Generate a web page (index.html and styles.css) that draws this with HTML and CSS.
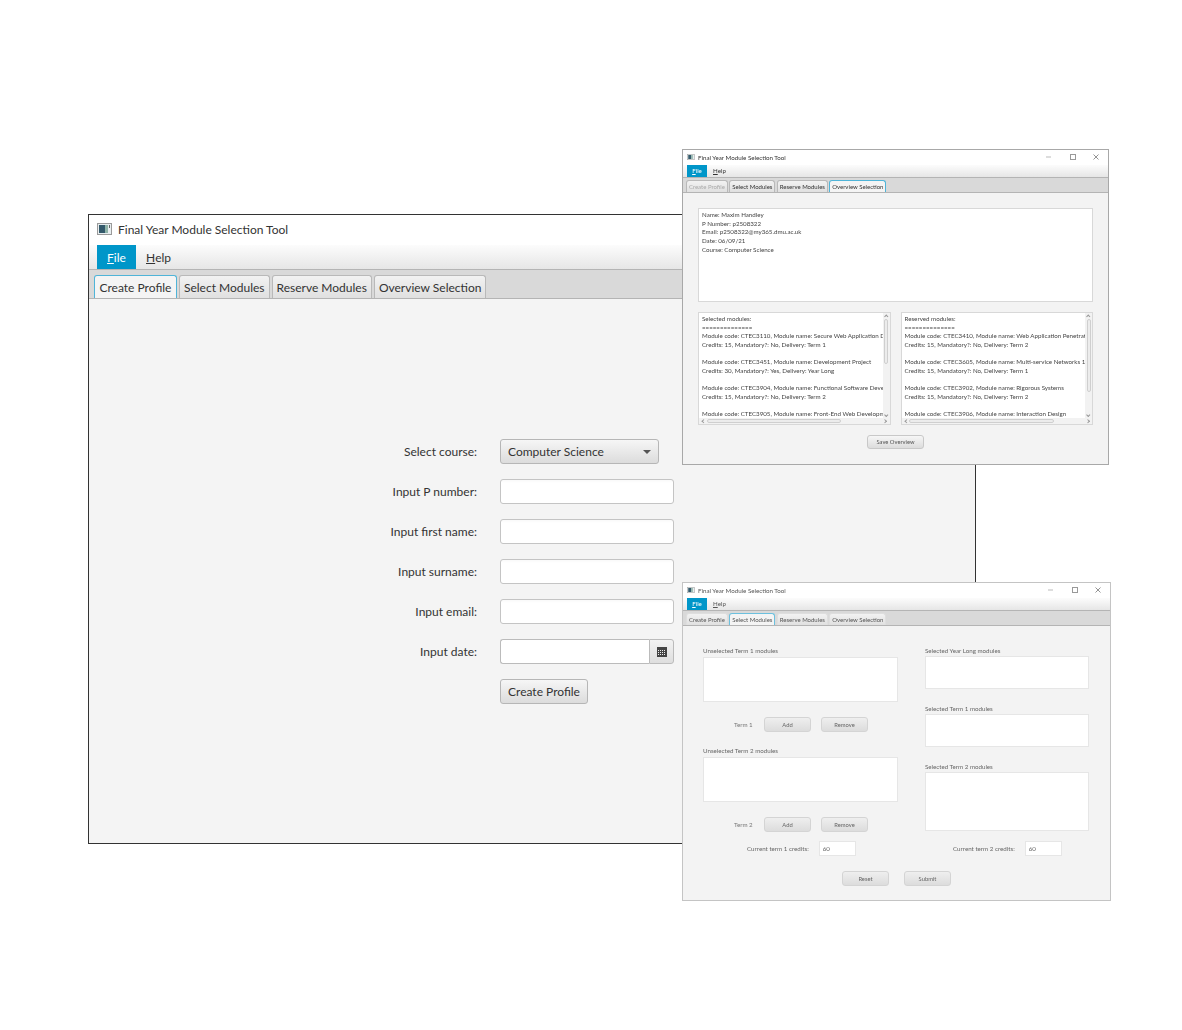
FILE: index.html
```html
<!DOCTYPE html>
<html lang="en">
<head>
    <meta charset="UTF-8">
    <meta name="viewport" content="width=device-width, initial-scale=1.0">
    <link rel="stylesheet" href="styles.css">
    <title>Final Year Module Selection Tool</title>
</head>
<body>
    <!-- main window: create profile -->
    <div class="window main-window">
        <div class="titlebar">
            <svg class="app-icon" viewBox="0 0 15 12"><rect x="0.5" y="0.5" width="14" height="11" fill="#e8eef0" stroke="#9a9a9a"/><rect x="2" y="2" width="6" height="8" fill="#33596b"/><rect x="8" y="2" width="3" height="8" fill="#8fb3a8"/><rect x="12" y="2" width="1" height="3" fill="#666"/></svg>
            <span>Final Year Module Selection Tool</span>
        </div>
        <div class="menubar">
            <div class="menu menu-active"><u>F</u>ile</div>
            <div class="menu"><u>H</u>elp</div>
        </div>
        <div class="tabbar">
            <div class="tab tab-selected">Create Profile</div>
            <div class="tab">Select Modules</div>
            <div class="tab">Reserve Modules</div>
            <div class="tab">Overview Selection</div>
        </div>
        <div class="content profile-form">
            <label>Select course:</label>
            <div class="button select-box"><span>Computer Science</span><i class="arrow"></i></div>
            <label>Input P number:</label>
            <div class="input"></div>
            <label>Input first name:</label>
            <div class="input"></div>
            <label>Input surname:</label>
            <div class="input"></div>
            <label>Input email:</label>
            <div class="input"></div>
            <label>Input date:</label>
            <div class="date-picker">
                <div class="date-field"></div>
                <div class="date-button">
                    <svg viewBox="0 0 10 10" width="10" height="10"><rect width="10" height="10" fill="#444"/><g fill="#eee"><rect x="1" y="3" width="1" height="1"/><rect x="3" y="3" width="1" height="1"/><rect x="5" y="3" width="1" height="1"/><rect x="7" y="3" width="1" height="1"/><rect x="1" y="5" width="1" height="1"/><rect x="3" y="5" width="1" height="1"/><rect x="5" y="5" width="1" height="1"/><rect x="7" y="5" width="1" height="1"/><rect x="1" y="7" width="1" height="1"/><rect x="3" y="7" width="1" height="1"/><rect x="5" y="7" width="1" height="1"/><rect x="7" y="7" width="1" height="1"/></g></svg>
                </div>
            </div>
            <span></span>
            <div class="button create-button">Create Profile</div>
        </div>
    </div>

    <!-- small window: overview -->
    <div class="window small-window overview-window">
        <div class="titlebar">
            <svg class="app-icon" viewBox="0 0 15 12"><rect x="0.5" y="0.5" width="14" height="11" fill="#e8eef0" stroke="#9a9a9a"/><rect x="2" y="2" width="6" height="8" fill="#33596b"/><rect x="8" y="2" width="3" height="8" fill="#8fb3a8"/></svg>
            <span>Final Year Module Selection Tool</span>
            <div class="window-controls">
                <svg viewBox="0 0 6 6"><path d="M0 3H5" stroke="#bbb"/></svg>
                <svg viewBox="0 0 6 6"><rect x="0.5" y="0.5" width="5" height="5" fill="none" stroke="#999"/></svg>
                <svg viewBox="0 0 6 6"><path d="M0.5 0.5L5.5 5.5M5.5 0.5L0.5 5.5" stroke="#666" stroke-width="0.7"/></svg>
            </div>
        </div>
        <div class="menubar">
            <div class="menu menu-active"><u>F</u>ile</div>
            <div class="menu"><u>H</u>elp</div>
        </div>
        <div class="tabbar">
            <div class="tab tab-disabled">Create Profile</div>
            <div class="tab">Select Modules</div>
            <div class="tab">Reserve Modules</div>
            <div class="tab tab-selected">Overview Selection</div>
        </div>
        <div class="content overview-content">
            <div class="text-area profile-text">Name: Maxim Handley
P Number: p2508322
Email: p2508322@my365.dmu.ac.uk
Date: 06/09/21
Course: Computer Science</div>
            <div class="overview-panes">
                <div class="scroll-pane">
                    <div class="pane-text">Selected modules:
==============
Module code: CTEC3110, Module name: Secure Web Application Development
Credits: 15, Mandatory?: No, Delivery: Term 1

Module code: CTEC3451, Module name: Development Project
Credits: 30, Mandatory?: Yes, Delivery: Year Long

Module code: CTEC3904, Module name: Functional Software Development
Credits: 15, Mandatory?: No, Delivery: Term 2

Module code: CTEC3905, Module name: Front-End Web Development</div>
                    <div class="vscroll"><i class="chev chev-up"></i><div class="vthumb selected-vthumb"></div><i class="chev chev-down"></i></div>
                    <div class="hscroll"><i class="chev chev-left"></i><div class="hthumb selected-hthumb"></div><i class="chev chev-right"></i></div>
                </div>
                <div class="scroll-pane">
                    <div class="pane-text">Reserved modules:
==============
Module code: CTEC3410, Module name: Web Application Penetration Testing
Credits: 15, Mandatory?: No, Delivery: Term 2

Module code: CTEC3605, Module name: Multi-service Networks 1
Credits: 15, Mandatory?: No, Delivery: Term 1

Module code: CTEC3902, Module name: Rigorous Systems
Credits: 15, Mandatory?: No, Delivery: Term 2

Module code: CTEC3906, Module name: Interaction Design</div>
                    <div class="vscroll"><i class="chev chev-up"></i><div class="vthumb reserved-vthumb"></div><i class="chev chev-down"></i></div>
                    <div class="hscroll"><i class="chev chev-left"></i><div class="hthumb reserved-hthumb"></div><i class="chev chev-right"></i></div>
                </div>
            </div>
            <div class="button save-button">Save Overview</div>
        </div>
    </div>

    <!-- small window: select modules, out of focus -->
    <div class="window small-window select-window">
        <div class="titlebar">
            <svg class="app-icon" viewBox="0 0 15 12"><rect x="0.5" y="0.5" width="14" height="11" fill="#e8eef0" stroke="#9a9a9a"/><rect x="2" y="2" width="6" height="8" fill="#33596b"/><rect x="8" y="2" width="3" height="8" fill="#8fb3a8"/></svg>
            <span>Final Year Module Selection Tool</span>
            <div class="window-controls">
                <svg viewBox="0 0 6 6"><path d="M0 3H5" stroke="#bbb"/></svg>
                <svg viewBox="0 0 6 6"><rect x="0.5" y="0.5" width="5" height="5" fill="none" stroke="#999"/></svg>
                <svg viewBox="0 0 6 6"><path d="M0.5 0.5L5.5 5.5M5.5 0.5L0.5 5.5" stroke="#666" stroke-width="0.7"/></svg>
            </div>
        </div>
        <div class="menubar">
            <div class="menu menu-active"><u>F</u>ile</div>
            <div class="menu"><u>H</u>elp</div>
        </div>
        <div class="tabbar">
            <div class="tab">Create Profile</div>
            <div class="tab tab-selected">Select Modules</div>
            <div class="tab">Reserve Modules</div>
            <div class="tab">Overview Selection</div>
        </div>
        <div class="content select-content">
            <div class="select-columns">
                <div class="left-column">
                    <div class="list-label">Unselected Term 1 modules</div>
                    <div class="list list-term"></div>
                    <div class="term-row">
                        <span class="term-name">Term 1</span>
                        <div class="button term-button">Add</div>
                        <div class="button term-button">Remove</div>
                    </div>
                    <div class="list-label second-label">Unselected Term 2 modules</div>
                    <div class="list list-term"></div>
                    <div class="term-row">
                        <span class="term-name">Term 2</span>
                        <div class="button term-button">Add</div>
                        <div class="button term-button">Remove</div>
                    </div>
                    <div class="credits-row left-credits">
                        <span>Current term 1 credits:</span>
                        <div class="credits-input">60</div>
                    </div>
                </div>
                <div class="right-column">
                    <div class="list-label">Selected Year Long modules</div>
                    <div class="list list-short"></div>
                    <div class="list-label right-label">Selected Term 1 modules</div>
                    <div class="list list-short"></div>
                    <div class="list-label right-label">Selected Term 2 modules</div>
                    <div class="list list-tall"></div>
                    <div class="credits-row right-credits">
                        <span>Current term 2 credits:</span>
                        <div class="credits-input">60</div>
                    </div>
                </div>
            </div>
            <div class="select-actions">
                <div class="button term-button">Reset</div>
                <div class="button term-button">Submit</div>
            </div>
        </div>
    </div>
</body>
</html>
```

FILE: styles.css
```css
html, body {
    margin: 0;
    height: 1030px;
    background-color: #fff;
    overflow: hidden;
}

body {
    position: relative;
    font-family: Lato, "Open Sans", sans-serif;
    color: #333;
}

/* windows sit on a free canvas */
.window {
    position: absolute;
    box-sizing: border-box;
    display: flex;
    flex-direction: column;
    background-color: #f4f4f4;
}

.main-window {
    left: 88px;
    top: 214px;
    width: 888px;
    height: 630px;
    border: 1px solid #333;
    font-size: 12px;
}

.small-window {
    font-size: 6.2px;
    border: 1px solid #a8a8a8;
}

.overview-window {
    left: 682px;
    top: 149px;
    width: 427px;
    height: 316px;
    filter: blur(0.55px);
}

.select-window {
    left: 682px;
    top: 582px;
    width: 429px;
    height: 319px;
    border-color: #c4c4c4;
    color: #555;
    filter: blur(0.65px);
}

.titlebar {
    display: flex;
    align-items: center;
    background-color: #fff;
    box-sizing: border-box;
    height: 30px;
    padding: 0 0 2px 8px;
    gap: 6px;
    flex-shrink: 0;
}

.app-icon {
    width: 15px;
    height: 12px;
}

.small-window .titlebar {
    height: 15px;
    padding: 0 0 1px 4px;
    gap: 3px;
}

.small-window .app-icon {
    width: 8px;
    height: 6px;
}

.window-controls {
    margin-left: auto;
    display: flex;
    gap: 17.5px;
    padding-right: 9px;
}

.window-controls svg {
    width: 6px;
    height: 6px;
}

.menubar {
    display: flex;
    box-sizing: border-box;
    height: 25px;
    padding-left: 8px;
    background: linear-gradient(#fcfcfc, #e6e6e6);
    border-bottom: 1px solid #b4b4b4;
    flex-shrink: 0;
}

.menu {
    display: flex;
    align-items: center;
    padding: 0 9px;
    margin-right: 1px;
}

.menu-active {
    background-color: #0096c9;
    color: #fff;
    width: 21px;
    justify-content: center;
}

.small-window .menubar {
    height: 12.5px;
    padding-left: 4px;
}

.small-window .menu {
    padding: 0 5px;
}

.small-window .menu-active {
    width: 10px;
}

.tabbar {
    display: flex;
    align-items: flex-end;
    gap: 2px;
    box-sizing: border-box;
    height: 29px;
    padding-left: 5px;
    background-color: #d9d9d9;
    border-bottom: 1px solid #b4b4b4;
    flex-shrink: 0;
}

.tab {
    box-sizing: border-box;
    height: 23px;
    line-height: 23px;
    padding: 0 4px;
    background: linear-gradient(#f2f2f2, #e0e0e0);
    border: 1px solid #b9b9b9;
    border-bottom: none;
    border-radius: 3px 3px 0 0;
}

.tab-selected {
    padding: 0 4.5px;
    background: #f4f4f4;
    border-color: #4fb4d8;
    border-width: 1px 1px 0;
}

.tab-disabled {
    color: #aaa;
}

.small-window .tabbar {
    height: 15.5px;
    padding-left: 3px;
    gap: 1.5px;
}

.small-window .tab {
    height: 12px;
    line-height: 11.5px;
    padding: 0 1.9px;
    font-size: 6px;
}

.select-window .tab {
    border-color: #dedede;
}

.select-window .tab-selected {
    border-color: #6cc0de;
}

.content {
    flex: 1;
    min-height: 0;
}

.button {
    box-sizing: border-box;
    background: linear-gradient(#f6f6f6, #dcdcdc);
    border: 1px solid #b6b6b6;
    border-radius: 3px;
    text-align: center;
}

/* main form */
.profile-form {
    display: grid;
    grid-template-columns: 388px 174px;
    grid-auto-rows: 25px;
    column-gap: 23px;
    row-gap: 15px;
    align-items: center;
    align-content: start;
    padding-top: 140px;
}

.profile-form label {
    text-align: right;
}

.select-box {
    display: flex;
    align-items: center;
    justify-content: space-between;
    width: 159px;
    height: 25px;
    padding: 0 7px;
}

.arrow {
    width: 0;
    height: 0;
    border-left: 4px solid transparent;
    border-right: 4px solid transparent;
    border-top: 4px solid #555;
}

.input {
    box-sizing: border-box;
    height: 25px;
    background: linear-gradient(#f9f9f9, #fff 3px);
    border: 1px solid #c4c4c4;
    border-radius: 3px;
}

.date-picker {
    display: flex;
    height: 25px;
}

.date-field {
    flex: 1;
    background-color: #fff;
    border: 1px solid #bbb;
    border-right: none;
    border-radius: 3px 0 0 3px;
}

.date-button {
    box-sizing: border-box;
    width: 25px;
    display: flex;
    align-items: center;
    justify-content: center;
    background: linear-gradient(#f2f2f2, #dedede);
    border: 1px solid #bbb;
    border-radius: 0 3px 3px 0;
}

.create-button {
    width: 88px;
    height: 25px;
    line-height: 23px;
}

/* overview window */
.overview-content {
    display: flex;
    flex-direction: column;
    padding: 15px 15px 0;
    background-color: #f3f3f3;
}

.text-area,
.pane-text {
    white-space: pre;
    line-height: 8.67px;
    overflow: hidden;
    color: #444;
}

.text-area {
    box-sizing: border-box;
    height: 94px;
    padding: 2px 3px;
    background-color: #fff;
    border: 1px solid #d8d8d8;
}

.overview-panes {
    display: flex;
    gap: 10px;
    margin-top: 10px;
}

.scroll-pane {
    box-sizing: border-box;
    flex: 1;
    height: 113px;
    display: grid;
    grid-template-columns: 1fr 7px;
    grid-template-rows: 1fr 6px;
    background-color: #fff;
    border: 1px solid #d8d8d8;
}

.pane-text {
    padding: 2px 0 0 3px;
    min-width: 0;
}

.vscroll {
    display: flex;
    flex-direction: column;
    align-items: center;
    background-color: #f2f2f2;
    padding: 2px 0;
}

.hscroll {
    grid-column: 1 / 3;
    display: flex;
    align-items: center;
    background-color: #f2f2f2;
    padding: 0 3px;
}

.chev {
    box-sizing: border-box;
    width: 2.5px;
    height: 2.5px;
    flex-shrink: 0;
    border: solid #999;
    border-width: 0.6px 0 0 0.6px;
}

.chev-up {
    transform: rotate(45deg);
}

.chev-down {
    transform: rotate(225deg);
    margin-top: auto;
}

.chev-left {
    transform: rotate(-45deg);
}

.chev-right {
    transform: rotate(135deg);
    margin-left: auto;
}

.vthumb,
.hthumb {
    box-sizing: border-box;
    background-color: #ececec;
    border: 1px solid #cfcfcf;
    border-radius: 2px;
}

.vthumb {
    width: 4px;
    margin-top: 1px;
}

.hthumb {
    height: 4px;
    margin-left: 2px;
}

.selected-vthumb {
    height: 45px;
}

.reserved-vthumb {
    height: 73px;
}

.selected-hthumb {
    width: 134px;
}

.reserved-hthumb {
    width: 145px;
}

.save-button {
    align-self: center;
    width: 57px;
    height: 14px;
    line-height: 12px;
    margin-top: 10px;
    font-size: 5.8px;
    color: #555;
    border-color: #c8c8c8;
}

/* select window */
.select-content {
    display: flex;
    flex-direction: column;
    background-color: #f3f3f3;
}

.select-columns {
    display: flex;
    padding: 21px 0 0 20px;
}

.left-column {
    width: 195px;
    margin-right: 27px;
}

.right-column {
    width: 164px;
}

.list-label {
    height: 9px;
    line-height: 8px;
    color: #666;
}

.left-column .list-label {
    height: 10px;
}

.left-column .second-label {
    margin-top: 15px;
}

.right-label {
    margin-top: 16px;
}

.list {
    box-sizing: border-box;
    background-color: #fff;
    border: 1px solid #e6e6e6;
}

.list-term {
    height: 45px;
}

.list-short {
    height: 33px;
}

.list-tall {
    height: 59px;
}

.term-row {
    display: flex;
    align-items: center;
    gap: 10px;
    margin-top: 15px;
    padding-left: 31px;
}

.term-name {
    width: 20px;
    color: #777;
}

.term-button {
    width: 47px;
    height: 15px;
    line-height: 13px;
    font-size: 5.8px;
    color: #666;
    background: linear-gradient(#efefef, #dcdcdc);
    border-color: #d4d4d4;
}

.credits-row {
    display: flex;
    align-items: center;
    gap: 10px;
    color: #666;
}

.left-credits {
    margin-top: 9px;
    padding-left: 44px;
}

.right-credits {
    margin-top: 10px;
    padding-left: 28px;
}

.credits-input {
    box-sizing: border-box;
    width: 37px;
    height: 15px;
    line-height: 13px;
    padding-left: 3px;
    background-color: #fff;
    border: 1px solid #e6e6e6;
}

.select-actions {
    display: flex;
    gap: 15px;
    margin-top: 15px;
    padding-left: 159px;
}
```
